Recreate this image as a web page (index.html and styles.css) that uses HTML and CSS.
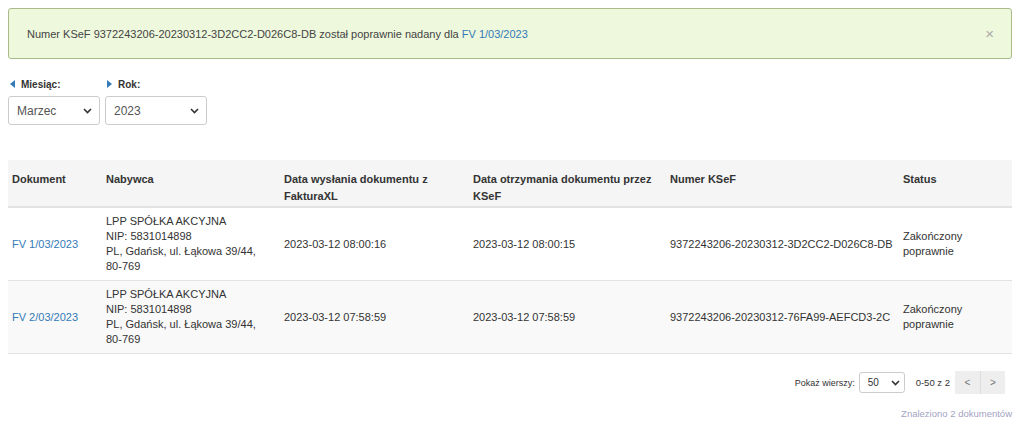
FILE: index.html
```html
<!DOCTYPE html>
<html lang="pl">

<head>
    <meta charset="utf8">
    <title>KSeF - dokumenty</title>
    <link rel="stylesheet" href="styles.css">
</head>

<body>
    <div class="alert-success">
        <span>Numer KSeF 9372243206-20230312-3D2CC2-D026C8-DB został poprawnie nadany dla <a href="#">FV 1/03/2023</a></span>
        <button class="close" title="Zamknij">&times;</button>
    </div>

    <div class="filters">
        <div class="filter">
            <label>
                <svg width="5" height="8" viewBox="0 0 5 8"><path d="M5 0 L0 4 L5 8 Z" /></svg>
                Miesiąc:
            </label>
            <div class="select month">
                <span>Marzec</span>
                <svg width="9" height="6" viewBox="0 0 9 6"><path d="M1 1 L4.5 4.5 L8 1" /></svg>
            </div>
        </div>
        <div class="filter">
            <label>
                <svg width="5" height="8" viewBox="0 0 5 8"><path d="M0 0 L5 4 L0 8 Z" /></svg>
                Rok:
            </label>
            <div class="select year">
                <span>2023</span>
                <svg width="9" height="6" viewBox="0 0 9 6"><path d="M1 1 L4.5 4.5 L8 1" /></svg>
            </div>
        </div>
    </div>

    <table class="docs">
        <colgroup>
            <col style="width: 94px">
            <col style="width: 178px">
            <col style="width: 189px">
            <col style="width: 197px">
            <col style="width: 233px">
            <col>
        </colgroup>
        <thead>
            <tr>
                <th>Dokument</th>
                <th>Nabywca</th>
                <th>Data wysłania dokumentu z FakturaXL</th>
                <th>Data otrzymania dokumentu przez KSeF</th>
                <th>Numer KSeF</th>
                <th>Status</th>
            </tr>
        </thead>
        <tbody>
            <tr>
                <td><a href="#">FV 1/03/2023</a></td>
                <td>LPP SPÓŁKA AKCYJNA<br>NIP: 5831014898<br>PL, Gdańsk, ul. Łąkowa 39/44, <span class="nowrap">80-769</span></td>
                <td>2023-03-12 08:00:16</td>
                <td>2023-03-12 08:00:15</td>
                <td>9372243206-20230312-3D2CC2-D026C8-DB</td>
                <td>Zakończony poprawnie</td>
            </tr>
            <tr>
                <td><a href="#">FV 2/03/2023</a></td>
                <td>LPP SPÓŁKA AKCYJNA<br>NIP: 5831014898<br>PL, Gdańsk, ul. Łąkowa 39/44, <span class="nowrap">80-769</span></td>
                <td>2023-03-12 07:58:59</td>
                <td>2023-03-12 07:58:59</td>
                <td>9372243206-20230312-76FA99-AEFCD3-2C</td>
                <td>Zakończony poprawnie</td>
            </tr>
        </tbody>
    </table>

    <div class="pager">
        <span class="rows-label">Pokaż wierszy:</span>
        <div class="select small">
            <span>50</span>
            <svg width="9" height="6" viewBox="0 0 9 6"><path d="M1 1 L4.5 4.5 L8 1" /></svg>
        </div>
        <span class="range">0-50 z 2</span>
        <div class="pager-buttons">
            <button>&lt;</button>
            <button>&gt;</button>
        </div>
    </div>
    <p class="found">Znaleziono 2 dokumentów</p>
</body>

</html>
```

FILE: styles.css
```css
* {
    box-sizing: border-box;
    margin: 0;
    padding: 0;
}

body {
    background-color: #fff;
    color: #333;
    font-family: "Liberation Sans", Arial, sans-serif;
    font-size: 11px;
    padding: 8px 12px 0 8px;
}

a {
    color: #337ab7;
    text-decoration: none;
}

.nowrap {
    white-space: nowrap;
}

.alert-success {
    display: flex;
    align-items: center;
    justify-content: space-between;
    height: 51px;
    padding: 0 17px 0 18px;
    background-color: #eef8dc;
    border: 1px solid #a9bb8a;
    border-radius: 3px;
    color: #444;
}

.alert-success .close {
    background: none;
    border: none;
    color: #aaa;
    font-size: 15px;
    font-family: "Liberation Sans", Arial, sans-serif;
    cursor: pointer;
}

.filters {
    display: flex;
    column-gap: 5px;
    margin-top: 19px;
}

.filter label {
    display: flex;
    align-items: center;
    column-gap: 6px;
    font-size: 10px;
    font-weight: bold;
    height: 12px;
    padding-left: 2px;
    margin-bottom: 6px;
}

.filter label svg {
    fill: #337ab7;
}

.select {
    display: flex;
    align-items: center;
    justify-content: space-between;
    height: 29px;
    padding: 0 7px 0 8px;
    border: 1px solid #ccc;
    border-radius: 3px;
    background-color: #fff;
    font-size: 12px;
    color: #555;
}

.select svg {
    fill: none;
    stroke: #333;
    stroke-width: 1.6;
}

.select.month {
    width: 92px;
}

.select.year {
    width: 102px;
}

table.docs {
    width: 100%;
    margin-top: 35px;
    border-collapse: collapse;
    table-layout: fixed;
}

table.docs th {
    background-color: #f5f5f5;
    text-align: left;
    vertical-align: top;
    font-weight: bold;
    line-height: 17px;
    padding: 11px 4px 1px 4px;
    border-bottom: 2px solid #e2e2e2;
}

table.docs td {
    vertical-align: middle;
    line-height: 15px;
    padding: 6px 4px;
    border-bottom: 1px solid #e2e2e2;
}

table.docs tbody tr:nth-child(2) td {
    background-color: #f9f9f9;
}

.pager {
    display: flex;
    justify-content: flex-end;
    align-items: center;
    margin-top: 17px;
    padding-right: 7px;
    column-gap: 4px;
}

.pager .rows-label {
    font-size: 9px;
}

.select.small {
    width: 46px;
    height: 21px;
    padding: 0 4px 0 8px;
    font-size: 10px;
    color: #333;
}

.pager .range {
    font-size: 9.5px;
    margin: 0 1px 0 7px;
}

.pager-buttons {
    display: flex;
}

.pager-buttons button {
    width: 25px;
    height: 23px;
    border: none;
    background-color: #eee;
    color: #777;
    font-family: "Liberation Sans", Arial, sans-serif;
    font-size: 10px;
    cursor: pointer;
}

.pager-buttons button + button {
    border-left: 1px solid #ddd;
}

.found {
    text-align: right;
    margin-top: 14px;
    font-size: 9.5px;
    color: #a3a3c2;
}
```
